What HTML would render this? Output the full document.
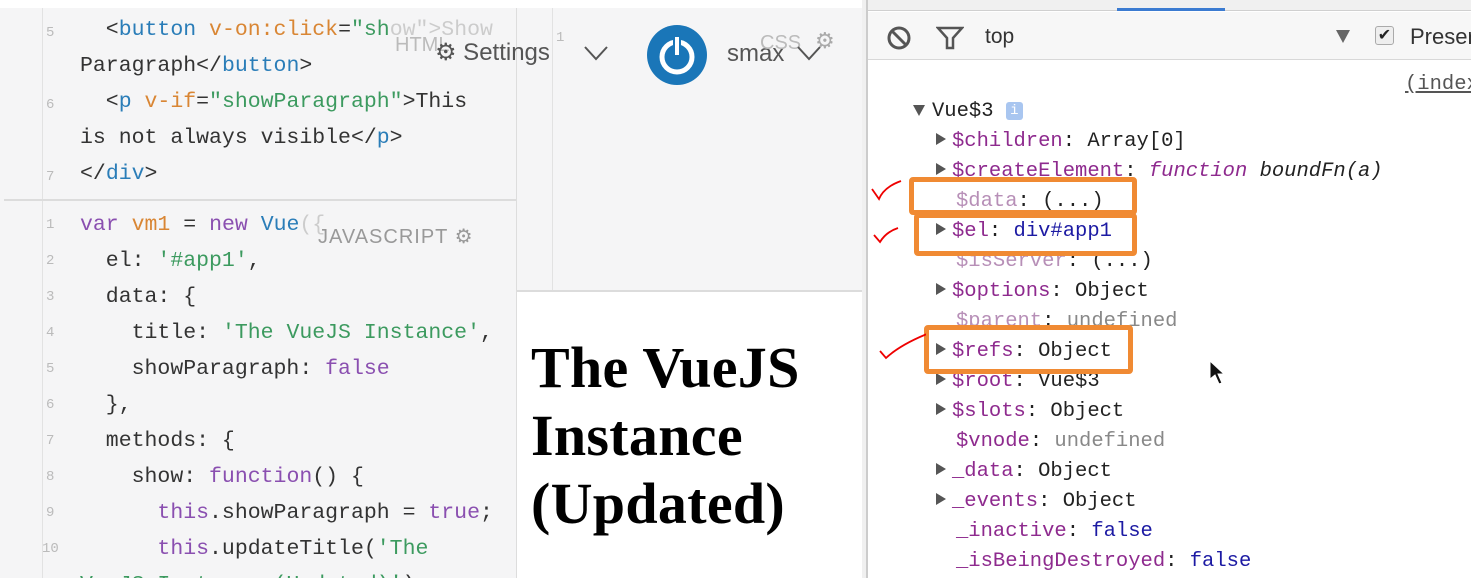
<!DOCTYPE html>
<html><head><meta charset="utf-8"><style>
*{margin:0;padding:0;box-sizing:border-box}
html,body{width:1471px;height:578px;overflow:hidden}
body{background:#fff;position:relative;font-family:"Liberation Sans",sans-serif}
.abs{position:absolute;white-space:pre}
.code{font-family:"Liberation Mono",monospace;font-size:21.5px;color:#333;line-height:36px;height:36px}
.ln{font-family:"Liberation Mono",monospace;font-size:14px;color:#bbb;position:absolute;left:46px;width:14px}
.t{color:#2a7db8}.a{color:#d98634}.s{color:#3c9a5f}.k{color:#8a4fb0}
.dt{font-family:"Liberation Mono",monospace;font-size:20.5px;line-height:30px;color:#222}
.p{color:#8e2a8e}.pl{color:#b78fb7}.g{color:#888}.b{color:#1c1aa3}
.tri{display:inline-block;width:0;height:0;border-left:10px solid #555;border-top:6px solid transparent;border-bottom:6px solid transparent;margin-right:6px;vertical-align:1px}
.box{position:absolute;border:5px solid #f08a33;border-radius:4px}
</style></head><body>
<div class="abs" style="left:0;top:0;width:517px;height:578px;background:#f5f5f6"></div>
<div class="abs" style="left:0;top:0;width:517px;height:8px;background:#fff"></div>
<div class="abs" style="left:42px;top:8px;width:1px;height:570px;background:#e2e2e2"></div>
<div class="abs" style="left:4px;top:199px;width:513px;height:2px;background:#dcdcdc"></div>
<div class="abs" style="left:516px;top:8px;width:1px;height:570px;background:#ddd"></div>
<div class="abs" style="left:517px;top:8px;width:345px;height:282px;background:#f5f5f6"></div>
<div class="abs" style="left:552px;top:8px;width:1px;height:282px;background:#e2e2e2"></div>
<div class="abs" style="left:517px;top:290px;width:345px;height:2px;background:#dcdcdc"></div>
<div class="abs" style="left:862px;top:0;width:4px;height:578px;background:#f0f0f0"></div>
<div class="ln" style="top:25px">5</div><div class="ln" style="top:97px">6</div><div class="ln" style="top:169px">7</div>
<div class="ln" style="left:556px;top:30px">1</div>
<div class="abs code" style="left:80px;top:12px">  &lt;<span class="t">button</span> <span class="a">v-on:click</span>=<span class="s">"sh</span><span style="color:#ccc">ow"&gt;Show</span></div>
<div class="abs code" style="left:80px;top:48px">Paragraph&lt;/<span class="t">button</span>&gt;</div>
<div class="abs code" style="left:80px;top:84px">  &lt;<span class="t">p</span> <span class="a">v-if</span>=<span class="s">"showParagraph"</span>&gt;This</div>
<div class="abs code" style="left:80px;top:120px">is not always visible&lt;/<span class="t">p</span>&gt;</div>
<div class="abs code" style="left:80px;top:156px">&lt;/<span class="t">div</span>&gt;</div>
<div class="abs" style="left:395px;top:34px;font-size:20px;color:#bbb">HTML</div>
<div class="abs" style="left:435px;top:38px;font-size:24px;color:#555">⚙ Settings</div>
<svg class="abs" style="left:583px;top:44px" width="26" height="18"><path d="M2 3 L13 15 L24 3" stroke="#555" stroke-width="2" fill="none"/></svg>
<svg class="abs" style="left:646px;top:24px" width="62" height="62"><circle cx="31" cy="31" r="30" fill="#1a76b8"/><circle cx="31" cy="33" r="15" fill="none" stroke="#fff" stroke-width="5"/><rect x="27" y="11" width="8" height="22" fill="#1a76b8"/><rect x="29" y="13" width="4" height="18" fill="#fff"/></svg>
<div class="abs" style="left:727px;top:40px;font-size:24px;color:#555">smax</div>
<div class="abs" style="left:760px;top:32px;font-size:20px;color:#bbb">CSS</div>
<svg class="abs" style="left:796px;top:44px" width="26" height="18"><path d="M2 3 L13 15 L24 3" stroke="#555" stroke-width="2" fill="none"/></svg>
<div class="abs" style="left:815px;top:28px;font-size:22px;color:#aaa">⚙</div>
<div class="ln" style="top:217px">1</div><div class="ln" style="top:253px">2</div><div class="ln" style="top:289px">3</div><div class="ln" style="top:325px">4</div><div class="ln" style="top:361px">5</div><div class="ln" style="top:397px">6</div><div class="ln" style="top:433px">7</div><div class="ln" style="top:469px">8</div><div class="ln" style="top:505px">9</div><div class="ln" style="top:541px;left:42px">10</div>
<div class="abs code" style="left:80px;top:207px"><span class="k">var</span> <span class="a">vm1</span> = <span class="k">new</span> <span class="t">Vue</span><span style="color:#ccc">({</span></div>
<div class="abs" style="left:318px;top:224px;font-size:20px;color:#999;letter-spacing:1px">JAVASCRIPT ⚙</div>
<div class="abs code" style="left:80px;top:243px">  el: <span class="s">'#app1'</span>,</div>
<div class="abs code" style="left:80px;top:279px">  data: {</div>
<div class="abs code" style="left:80px;top:315px">    title: <span class="s">'The VueJS Instance'</span>,</div>
<div class="abs code" style="left:80px;top:351px">    showParagraph: <span class="k">false</span></div>
<div class="abs code" style="left:80px;top:387px">  },</div>
<div class="abs code" style="left:80px;top:423px">  methods: {</div>
<div class="abs code" style="left:80px;top:459px">    show: <span class="k">function</span>() {</div>
<div class="abs code" style="left:80px;top:495px">      <span class="k">this</span>.showParagraph = <span class="k">true</span>;</div>
<div class="abs code" style="left:80px;top:531px">      <span class="k">this</span>.updateTitle(<span class="s">'The</span></div>
<div class="abs code" style="left:80px;top:567px"><span class="s">VueJS Instance (Updated)'</span>);</div>
<div class="abs" style="left:531px;top:334px;font-family:'Liberation Serif',serif;font-weight:bold;font-size:58px;line-height:68px;color:#000;letter-spacing:0.3px">The VueJS<br>Instance<br>(Updated)</div>
<div class="abs" style="left:866px;top:0;width:605px;height:11px;background:#f0f0f0;border-bottom:1px solid #d0d0d0"></div>
<div class="abs" style="left:1117px;top:8px;width:108px;height:3px;background:#3b7bd1"></div>
<div class="abs" style="left:866px;top:12px;width:605px;height:48px;background:#f7f7f7;border-bottom:1px solid #d8d8d8"></div>
<div class="abs" style="left:866px;top:0;width:2px;height:578px;background:#ccc"></div>
<svg class="abs" style="left:886px;top:25px" width="26" height="26"><circle cx="13" cy="13" r="10" fill="none" stroke="#555" stroke-width="3"/><path d="M6 6 L20 20" stroke="#555" stroke-width="3"/></svg>
<svg class="abs" style="left:936px;top:25px" width="28" height="26"><path d="M2 3 H26 L17 13 V23 H11 V13 Z" fill="none" stroke="#555" stroke-width="2.5"/></svg>
<div class="abs" style="left:985px;top:25px;font-size:21px;color:#333">top</div>
<div class="abs" style="left:1336px;top:30px;width:0;height:0;border-top:13px solid #666;border-left:7px solid transparent;border-right:7px solid transparent"></div>
<div class="abs" style="left:1375px;top:26px;width:19px;height:19px;border:1px solid #aaa;border-radius:3px;background:#eee;font-size:16px;line-height:17px;text-align:center;color:#222">✔</div>
<div class="abs" style="left:1410px;top:24px;font-size:22px;color:#333">Preser</div>
<div class="abs dt" style="left:1405px;top:70px;color:#555;text-decoration:underline">(index</div>
<div class="abs dt" style="left:913px;top:97px"><span style="display:inline-block;border-top:11px solid #555;border-left:6px solid transparent;border-right:6px solid transparent;margin-right:7px"></span>Vue$3 <span style="display:inline-block;width:17px;height:18px;background:#a9c6f0;border-radius:3px;color:#fff;font-size:14px;line-height:18px;text-align:center;vertical-align:2px">i</span></div>
<div class="abs dt" style="left:936px;top:127px"><span class="tri"></span><span class="p">$children</span>: Array[0]</div>
<div class="abs dt" style="left:936px;top:157px"><span class="tri"></span><span class="p">$createElement</span>: <i class="p">function</i> <i>boundFn(a)</i></div>
<div class="abs dt" style="left:956px;top:187px"><span class="pl">$data</span>: (...)</div>
<div class="abs dt" style="left:936px;top:217px"><span class="tri"></span><span class="p">$el</span>: <span class="b">div#app1</span></div>
<div class="abs dt" style="left:956px;top:247px"><span class="pl">$isServer</span>: (...)</div>
<div class="abs dt" style="left:936px;top:277px"><span class="tri"></span><span class="p">$options</span>: Object</div>
<div class="abs dt" style="left:956px;top:307px"><span class="pl">$parent</span>: <span class="g">undefined</span></div>
<div class="abs dt" style="left:936px;top:337px"><span class="tri"></span><span class="p">$refs</span>: Object</div>
<div class="abs dt" style="left:936px;top:367px"><span class="tri"></span><span class="p">$root</span>: Vue$3</div>
<div class="abs dt" style="left:936px;top:397px"><span class="tri"></span><span class="p">$slots</span>: Object</div>
<div class="abs dt" style="left:956px;top:427px"><span class="p">$vnode</span>: <span class="g">undefined</span></div>
<div class="abs dt" style="left:936px;top:457px"><span class="tri"></span><span class="p">_data</span>: Object</div>
<div class="abs dt" style="left:936px;top:487px"><span class="tri"></span><span class="p">_events</span>: Object</div>
<div class="abs dt" style="left:956px;top:517px"><span class="p">_inactive</span>: <span class="b">false</span></div>
<div class="abs dt" style="left:956px;top:547px"><span class="p">_isBeingDestroyed</span>: <span class="b">false</span></div>
<div class="box" style="left:909px;top:177px;width:228px;height:38px"></div>
<div class="box" style="left:914px;top:213px;width:223px;height:43px"></div>
<div class="box" style="left:924px;top:325px;width:209px;height:49px"></div>
<svg class="abs" style="left:866px;top:175px" width="60" height="190"><g stroke="#e00" stroke-width="1.8" fill="none"><path d="M6 14 L13 24 Q18 12 35 6"/><path d="M8 60 L14 67 Q20 57 32 53"/><path d="M14 176 L20 183 Q34 170 61 159"/></g></svg>
<svg class="abs" style="left:1208px;top:359px" width="18" height="28"><path d="M2 2 L2 20 L7 16 L11 25 L14 24 L10 15 L16 15 Z" fill="#111" stroke="#fff" stroke-width="1"/></svg>
</body></html>
